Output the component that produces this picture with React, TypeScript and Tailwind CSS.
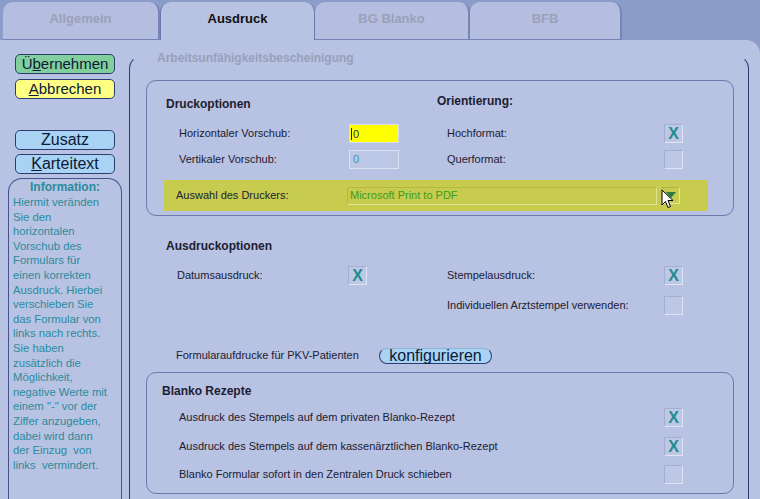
import React from "react";

function Tab({ label, active, w }: { label: string; active?: boolean; w: string }) {
  return (
    <div
      className={
        "flex h-[38px] shrink-0 justify-center rounded-t-[10px] pt-[9px] text-[13px] font-bold leading-[16px] " +
        w +
        (active
          ? " border-x border-x-[#6a78aa] bg-[#b8c2e3] text-[#101010]"
          : " border-r-2 border-b border-r-[#7684b6] border-b-[#7482b4] bg-[#b5bee1] text-[#9aa1b7]")
      }
    >
      {label}
    </div>
  );
}

function Check({ checked }: { checked?: boolean }) {
  return (
    <div className="flex h-[19px] w-[19px] shrink-0 items-center justify-center border border-t-[#a4aed0] border-l-[#a4aed0] border-r-[#dfe4f5] border-b-[#dfe4f5] bg-[#bdc7e6] text-[16px] font-bold leading-[16px] text-[#1f8c8e]">
      {checked ? "X" : ""}
    </div>
  );
}

function Btn({ children, bg, w = "w-[100px]", text = "text-[15px]" }: { children: React.ReactNode; bg: string; w?: string; text?: string }) {
  return (
    <div
      className={
        "flex h-[20px] items-center justify-center rounded-[5px] border border-[#2c3c70] leading-[18px] text-[#0c1838] " +
        bg +
        " " +
        w +
        " " +
        text
      }
    >
      {children}
    </div>
  );
}

export default function App() {
  const info = [
    "Hiermit veränden",
    "Sie den",
    "horizontalen",
    "Vorschub des",
    "Formulars für",
    "einen korrekten",
    "Ausdruck. Hierbei",
    "verschieben Sie",
    "das Formular von",
    "links nach rechts.",
    "Sie haben",
    "zusätzlich die",
    "Möglichkeit,",
    "negative Werte mit",
    'einem "-" vor der',
    "Ziffer anzugeben,",
    "dabei wird dann",
    "der Einzug  von",
    "links  vermindert.",
  ];
  return (
    <div className="h-[499px] w-[760px] overflow-hidden bg-[#8c9cc8] font-['Liberation_Sans',Arial,sans-serif] text-[11px] text-[#1c2030]">
      {/* tabs */}
      <div className="flex h-[40px] items-end pl-[3px]">
        <Tab label="Allgemein" w="w-[157px]" />
        <Tab label="Ausdruck" active w="w-[155px]" />
        <Tab label="BG Blanko" w="w-[155px]" />
        <Tab label="BFB" w="w-[152px]" />
      </div>
      {/* panel */}
      <div className="flex h-[459px] rounded-tr-[14px] bg-[#b8c2e3]">
        {/* left column */}
        <div className="flex w-[128px] shrink-0 flex-col pl-[8px] pt-[14px]">
          <div className="ml-[7px] flex flex-col gap-[5px]">
            <Btn bg="bg-[#80cf9c]">
              <span>
                Ü<span className="underline">b</span>ernehmen
              </span>
            </Btn>
            <Btn bg="bg-[#ffff84]">
              <span>
                <span className="underline">A</span>bbrechen
              </span>
            </Btn>
          </div>
          <div className="ml-[7px] mt-[31px] flex flex-col gap-[4px]">
            <Btn bg="bg-[#a8d3f3]" text="text-[16px]">
              Zusatz
            </Btn>
            <Btn bg="bg-[#a8d3f3]" text="text-[16px]">
              <span>
                <span className="underline">K</span>arteitext
              </span>
            </Btn>
          </div>
          <div className="mt-[4px] w-[114px] flex-1 rounded-t-[14px] border border-b-0 border-[#44538e] px-[4px] pt-[1px] text-[#2a8c9c]">
            <div className="text-center text-[12px] font-bold leading-[15px]">Information:</div>
            <div className="text-[11.3px] leading-[14.6px] whitespace-pre">
              {info.map((l, i) => (
                <div key={i}>{l}</div>
              ))}
            </div>
          </div>
        </div>

        {/* main */}
        <div className="flex-1 pl-[1px] pt-[15px]">
          <div className="h-[460px] w-[620px] rounded-t-[14px] border border-b-0 border-[#2e3a74] border-t-transparent">
            <div className="-mt-[5px] ml-[27px] h-[15px] text-[12px] font-bold leading-[15px] text-[#98a0b9]">
              Arbeitsunfähigkeitsbescheinigung
            </div>
            <div className="ml-[16px]">
              {/* Druckoptionen */}
              <div className="mt-[14px] w-[588px] rounded-[10px] border border-[#6c7ab0] pb-[4px] pt-[13px]">
                <div className="flex h-[20px] items-center">
                  <div className="w-[290px] pl-[19px] text-[12px] font-bold">Druckoptionen</div>
                  <div className="-mt-[6px] text-[12px] font-bold">Orientierung:</div>
                </div>
                <div className="mt-[10px] flex h-[19px] items-center pl-[32px]">
                  <div className="w-[170px]">Horizontaler Vorschub:</div>
                  <div className="flex h-[19px] w-[50px] items-center border border-[#d8def0] bg-[#ffff00] pl-[1px] text-[#203080]">
                    <span className="border-l border-[#202020] pl-[1px] leading-[12px]">0</span>
                  </div>
                  <div className="w-[48px]" />
                  <div className="w-[217px]">Hochformat:</div>
                  <Check checked />
                </div>
                <div className="mt-[7px] flex h-[19px] items-center pl-[32px]">
                  <div className="w-[170px]">Vertikaler Vorschub:</div>
                  <div className="flex h-[19px] w-[50px] items-center border border-[#dce2f4] bg-[#bcc6e5] pl-[3px] text-[#3a98b0]">
                    0
                  </div>
                  <div className="w-[48px]" />
                  <div className="w-[217px]">Querformat:</div>
                  <Check />
                </div>
                <div className="relative ml-[17px] mt-[11px] flex h-[31px] w-[544px] items-center bg-[#c8cc4e] pl-[12px]">
                  <div className="w-[171px]">Auswahl des Druckers:</div>
                  <div className="flex h-[18px] w-[310px] items-center border border-[#dfe39a] border-l-[#b4b842] border-t-[#b4b842] pl-[2px] text-[#3a9c22]">
                    Microsoft Print to PDF
                  </div>
                  <div className="ml-[5px] flex h-[17px] w-[18px] items-center justify-center border border-[#e4e8a0] border-l-[#b0b448] border-t-[#b0b448]">
                    <svg width="10" height="7" viewBox="0 0 10 7">
                      <path d="M0 0 L10 0 L5 6 Z" fill="#2a7a48" />
                    </svg>
                  </div>
                  <svg className="absolute left-[497px] top-[9px]" width="14" height="21" viewBox="0 0 14 21">
                    <path d="M1 1 L1 16 L4.5 12.5 L7 18.5 L9.5 17.5 L7 11.5 L12 11.5 Z" fill="#ffffff" stroke="#000" strokeWidth="1" strokeLinejoin="round" />
                  </svg>
                </div>
              </div>

              {/* Ausdruckoptionen */}
              <div className="mt-[22px] h-[16px] pl-[20px] text-[12px] font-bold leading-[16px]">Ausdruckoptionen</div>
              <div className="mt-[12px] flex h-[19px] items-center pl-[31px]">
                <div className="w-[171px]">Datumsausdruck:</div>
                <Check checked />
                <div className="w-[80px]" />
                <div className="w-[217px]">Stempelausdruck:</div>
                <Check checked />
              </div>
              <div className="mt-[11px] flex h-[19px] items-center pl-[31px]">
                <div className="w-[270px]" />
                <div className="w-[217px]">Individuellen Arztstempel verwenden:</div>
                <Check />
              </div>

              <div className="mt-[31px] flex h-[19px] items-center pl-[30px]">
                <div className="w-[203px]">Formularaufdrucke für PKV-Patienten</div>
                <div className="flex h-[16px] w-[113px] items-center justify-center rounded-full border border-[#2c3c70] border-t-[#8fb4dc] bg-[#a8d3f3] text-[16px] leading-[16px] text-[#0c1838]">
                  konfigurieren
                </div>
              </div>

              {/* Blanko Rezepte */}
              <div className="mt-[7px] h-[122px] w-[588px] rounded-[10px] border border-[#6c7ab0] pt-[10px]">
                <div className="h-[16px] pl-[15px] text-[12px] font-bold leading-[16px]">Blanko Rezepte</div>
                <div className="mt-[9px] flex h-[19px] items-center pl-[32px]">
                  <div className="w-[485px]">Ausdruck des Stempels auf dem privaten Blanko-Rezept</div>
                  <Check checked />
                </div>
                <div className="mt-[10px] flex h-[19px] items-center pl-[32px]">
                  <div className="w-[485px]">Ausdruck des Stempels auf dem kassenärztlichen Blanko-Rezept</div>
                  <Check checked />
                </div>
                <div className="mt-[9px] flex h-[19px] items-center pl-[32px]">
                  <div className="w-[485px]">Blanko Formular sofort in den Zentralen Druck schieben</div>
                  <Check />
                </div>
              </div>
            </div>
          </div>
        </div>
      </div>
    </div>
  );
}
